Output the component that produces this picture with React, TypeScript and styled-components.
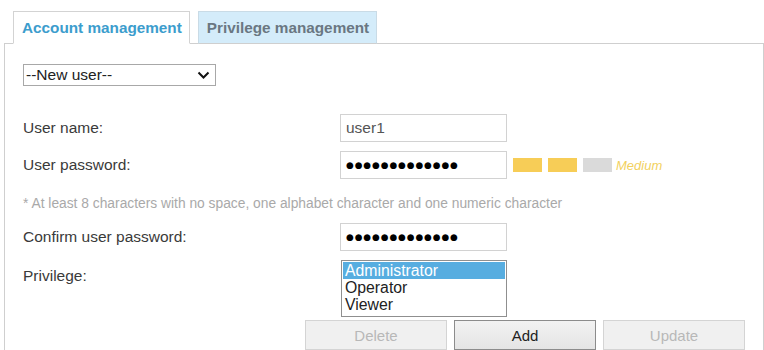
import styled, { createGlobalStyle } from "styled-components";

const Global = createGlobalStyle`
  body {
    margin: 0;
    background: #fff;
    font-family: "Liberation Sans", Arial, sans-serif;
  }
`;

const App = () => {
  return (
    <Page>
      <Global />
      <Tabs>
        <Tab $active>Account management</Tab>
        <Tab>Privilege management</Tab>
      </Tabs>
      <Panel>
        <Dropdown>
          <span>--New user--</span>
          <svg width="13" height="9" viewBox="0 0 13 9">
            <path d="M1.5 1.5 L6.5 6.5 L11.5 1.5" fill="none" stroke="#111" strokeWidth="2" />
          </svg>
        </Dropdown>

        <Form>
          <Label>User name:</Label>
          <Field>user1</Field>

          <Label>User password:</Label>
          <FieldRow>
            <Field $secret>●●●●●●●●●●●●●</Field>
            <Strength>
              <Bar $on />
              <Bar $on />
              <Bar />
              <StrengthText>Medium</StrengthText>
            </Strength>
          </FieldRow>

          <Hint>
            * At least 8 characters with no space, one alphabet character and one numeric character
          </Hint>

          <Label>Confirm user password:</Label>
          <Field $secret>●●●●●●●●●●●●●</Field>

          <Label $top>Privilege:</Label>
          <List>
            <Option $selected>Administrator</Option>
            <Option>Operator</Option>
            <Option>Viewer</Option>
          </List>
        </Form>

        <Buttons>
          <Button disabled>Delete</Button>
          <Button>Add</Button>
          <Button disabled>Update</Button>
        </Buttons>
      </Panel>
    </Page>
  );
};

export default App;

const Page = styled.div`
  padding: 11px 0 0 4px;
  width: 760px;
`;

const Tabs = styled.div`
  display: flex;
  gap: 8px;
  padding-left: 9px;
`;

const Tab = styled.div<{ $active?: boolean }>`
  box-sizing: border-box;
  height: 33px;
  margin-bottom: -1px;
  padding: 0 7px 0 8px;
  display: flex;
  align-items: center;
  font-size: 15.3px;
  font-weight: bold;
  border: 1px solid ${(p) => (p.$active ? "#d3d3d3" : "#c9dbe6")};
  border-bottom: ${(p) => (p.$active ? "1px solid #fff" : "1px solid #cfcfcf")};
  background: ${(p) => (p.$active ? "#fff" : "#d4ecfa")};
  color: ${(p) => (p.$active ? "#3c9dcd" : "#6a7782")};
  position: relative;
`;

const Panel = styled.div`
  box-sizing: border-box;
  width: 760px;
  height: 320px;
  border: 1px solid #cfcfcf;
  border-bottom: none;
  padding: 20px 17px 0 18px;
`;

const Dropdown = styled.div`
  box-sizing: border-box;
  width: 193px;
  height: 22px;
  border: 1px solid #a8a8a8;
  display: flex;
  align-items: center;
  justify-content: space-between;
  padding: 0 5px 0 2px;
  font-size: 15.5px;
  color: #222;
`;

const Form = styled.div`
  display: grid;
  grid-template-columns: 317px 1fr;
  row-gap: 9px;
  margin-top: 28px;
  align-items: center;
`;

const Label = styled.div<{ $top?: boolean }>`
  font-size: 15.5px;
  color: #3a3a3a;
  align-self: ${(p) => (p.$top ? "start" : "center")};
  padding-top: ${(p) => (p.$top ? "7px" : "0")};
`;

const FieldRow = styled.div`
  display: flex;
  align-items: center;
  gap: 6px;
`;

const Field = styled.div<{ $secret?: boolean }>`
  box-sizing: border-box;
  width: 167px;
  height: 28px;
  border: 1px solid #d2d2d2;
  display: flex;
  align-items: center;
  padding-left: 5px;
  font-size: ${(p) => (p.$secret ? "8.8px" : "15.5px")};
  letter-spacing: ${(p) => (p.$secret ? "1px" : "0")};
  color: ${(p) => (p.$secret ? "#000" : "#555")};
  font-family: ${(p) => (p.$secret ? '"DejaVu Sans", sans-serif' : "inherit")};
`;

const Strength = styled.div`
  display: flex;
  align-items: center;
  gap: 6px;
`;

const Bar = styled.div<{ $on?: boolean }>`
  width: 29px;
  height: 14px;
  background: ${(p) => (p.$on ? "#f7cd57" : "#dadada")};
`;

const StrengthText = styled.span`
  margin-left: -2px;
  font-size: 13px;
  font-style: italic;
  color: #f2d15e;
`;

const Hint = styled.div`
  grid-column: 1 / 3;
  font-size: 13.8px;
  color: #a9a9a9;
  margin: 8px 0 3px;
`;

const List = styled.div`
  box-sizing: border-box;
  width: 166px;
  height: 57px;
  border: 1px solid #8f8f8f;
  padding: 1px;
  font-size: 15.8px;
  margin-left: 1px;
`;

const Option = styled.div<{ $selected?: boolean }>`
  height: 17px;
  line-height: 17px;
  padding-left: 2px;
  background: ${(p) => (p.$selected ? "#57ade0" : "transparent")};
  color: ${(p) => (p.$selected ? "#fff" : "#222")};
`;

const Buttons = styled.div`
  display: flex;
  justify-content: flex-end;
  gap: 7px;
  margin-top: 3px;
  padding-right: 1px;
`;

const Button = styled.button`
  box-sizing: border-box;
  width: 142px;
  height: 30px;
  font-family: inherit;
  font-size: 15px;
  border: 1px solid #8c8c8c;
  background: linear-gradient(#f2f2f2, #e4e4e4);
  color: #222;

  &:disabled {
    border-color: #d4d4d4;
    background: #f0f0f0;
    color: #b8b8b8;
  }
`;
